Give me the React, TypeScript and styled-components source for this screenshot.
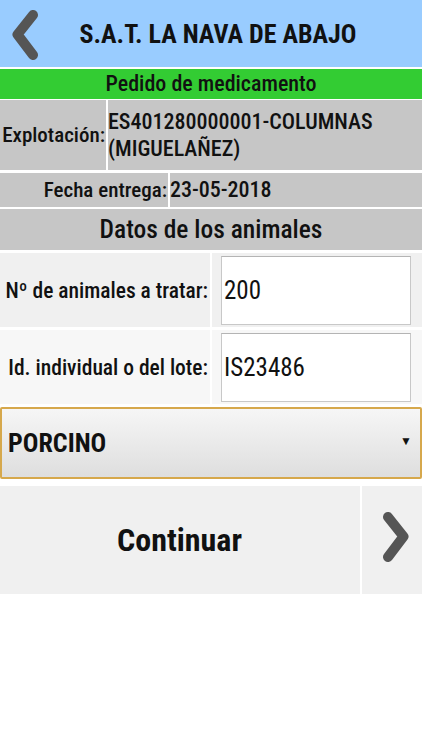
import React from 'react';
import styled, {createGlobalStyle} from 'styled-components';

const GlobalStyle = createGlobalStyle`
  body {
    margin: 0;
    background: #fff;
    font-family: Roboto, "Liberation Sans", sans-serif;
    font-stretch: 85%;
    color: #111;
  }
`;

const Chevron = ({dir}: {dir: 'left' | 'right'}) => {
    const d = dir === 'left' ? 'M21 5 L5.5 24.5 L21 45' : 'M5 5 L20.5 24.5 L5 45';
    return <svg width="26" height="50" viewBox="0 0 26 50">
        <path d={d} fill="none" stroke="#555" strokeWidth="10" strokeLinecap="round" strokeLinejoin="round"/>
    </svg>;
};

const App = () => {
    return <>
        <GlobalStyle/>
        <Page>
            <Header>
                <BackButton><Chevron dir="left"/></BackButton>
                <Title>S.A.T. LA NAVA DE ABAJO</Title>
            </Header>

            <Banner>Pedido de medicamento</Banner>

            <InfoRow $top={1} $labelWidth={106} $height={70}>
                <InfoLabel>Explotación:</InfoLabel>
                <InfoValue>ES401280000001-COLUMNAS<br/>(MIGUELAÑEZ)</InfoValue>
            </InfoRow>

            <InfoRow $top={3} $labelWidth={168} $height={34}>
                <InfoLabel>Fecha entrega:</InfoLabel>
                <InfoValue>23-05-2018</InfoValue>
            </InfoRow>

            <SectionTitle>Datos de los animales</SectionTitle>

            <FieldRow $top={3} $bg="#f0f0f0">
                <FieldLabel>Nº de animales a tratar:</FieldLabel>
                <FieldCell><Input defaultValue="200"/></FieldCell>
            </FieldRow>

            <FieldRow $top={3} $bg="#f7f7f7">
                <FieldLabel>Id. individual o del lote:</FieldLabel>
                <FieldCell><Input defaultValue="IS23486"/></FieldCell>
            </FieldRow>

            <Select>
                <span>PORCINO</span>
                <Caret>▼</Caret>
            </Select>

            <ActionRow>
                <ContinueButton>Continuar</ContinueButton>
                <NextButton><Chevron dir="right"/></NextButton>
            </ActionRow>
        </Page>
    </>;
};

export default App;


const Page = styled.div`
  display: flex;
  flex-direction: column;
  width: 422px;
  min-height: 750px;
  background: #fff;
`;

const Header = styled.div`
  display: flex;
  align-items: center;
  height: 67px;
  background: #99ccff;
`;

const BackButton = styled.div`
  display: flex;
  align-items: center;
  justify-content: center;
  width: 50px;
  height: 67px;
  padding-top: 3px;
  box-sizing: border-box;
`;

const Title = styled.h1`
  flex: 1;
  margin: 0 36px 0 0;
  text-align: center;
  font-size: 26px;
  font-weight: 700;
  color: #111;
`;

const Banner = styled.div`
  margin-top: 2px;
  height: 30px;
  line-height: 30px;
  background: #33cc33;
  text-align: center;
  font-size: 22px;
  font-weight: 500;
`;

const InfoRow = styled.div<{$top: number; $labelWidth: number; $height: number}>`
  display: grid;
  grid-template-columns: ${p => p.$labelWidth}px 1fr;
  column-gap: 2px;
  margin-top: ${p => p.$top}px;
  min-height: ${p => p.$height}px;
  background: #fff;

  & > * {
    background: #c6c6c6;
  }
`;

const InfoLabel = styled.div`
  display: flex;
  align-items: center;
  justify-content: flex-end;
  padding-right: 1px;
  font-size: 21px;
  font-weight: 500;
  white-space: nowrap;
`;

const InfoValue = styled.div`
  display: flex;
  align-items: center;
  font-size: 22px;
  font-weight: 500;
  line-height: 27px;
  padding-bottom: 1px;
  white-space: nowrap;
`;

const SectionTitle = styled.div`
  margin-top: 2px;
  height: 41px;
  line-height: 40px;
  background: #c6c6c6;
  text-align: center;
  font-size: 25.5px;
  font-weight: 500;
`;

const FieldRow = styled.div<{$top: number; $bg: string}>`
  display: grid;
  grid-template-columns: 210px 1fr;
  column-gap: 2px;
  margin-top: ${p => p.$top}px;

  & > * {
    background: ${p => p.$bg};
  }
`;

const FieldLabel = styled.div`
  display: flex;
  align-items: center;
  justify-content: flex-end;
  padding-right: 2px;
  font-size: 21.5px;
  font-weight: 500;
  white-space: nowrap;
`;

const FieldCell = styled.div`
  padding: 3px 10px 2px 9px;
`;

const Input = styled.input`
  box-sizing: border-box;
  display: block;
  width: 190px;
  height: 69px;
  margin: 0;
  padding: 0 0 0 2px;
  border: 1px solid #c8c8c8;
  border-top-color: #b4b4b4;
  background: #fff;
  font-family: inherit;
  font-stretch: 85%;
  font-size: 25px;
  color: #111;
  outline: none;
`;

const Select = styled.div`
  box-sizing: border-box;
  display: flex;
  align-items: center;
  justify-content: space-between;
  margin-top: 3px;
  width: 422px;
  height: 72px;
  padding: 0 8px 0 6px;
  border: 2px solid #d6a84c;
  border-radius: 2px;
  background: linear-gradient(#f6f6f6, #dedede);
  font-size: 26px;
  font-weight: 700;
`;

const Caret = styled.span`
  font-size: 12px;
  margin-top: -4px;
`;

const ActionRow = styled.div`
  display: grid;
  grid-template-columns: 360px 1fr;
  column-gap: 2px;
  margin-top: 7px;
  height: 108px;
`;

const ContinueButton = styled.div`
  display: flex;
  align-items: center;
  justify-content: center;
  padding-right: 1px;
  background: #f0f0f0;
  font-size: 32px;
  font-weight: 700;
`;

const NextButton = styled.div`
  display: flex;
  align-items: center;
  justify-content: center;
  padding: 0 0 7px 8px;
  background: #f0f0f0;
`;
